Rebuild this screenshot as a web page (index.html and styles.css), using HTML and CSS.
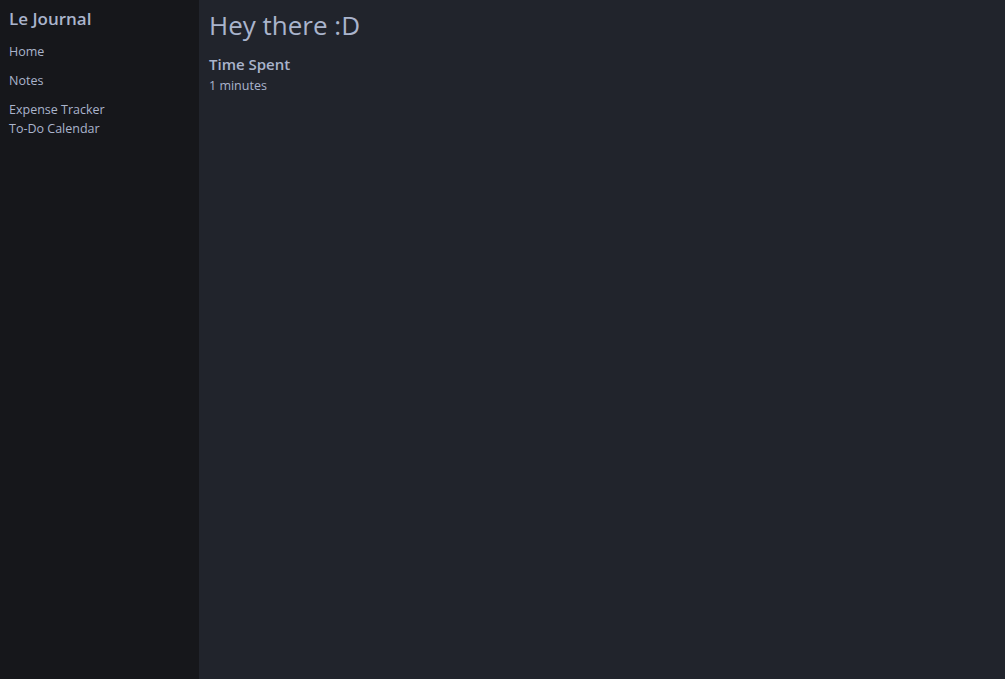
FILE: index.html
```html
<!DOCTYPE html>
<html>
<head>
<meta charset="utf-8">
<link rel="stylesheet" href="styles.css">
</head>
<body>
<div class="app">
  <aside class="sidebar">
    <div class="brand">Le Journal</div>
    <nav class="nav">
      <a class="nav-link gap" href="#">Home</a>
      <a class="nav-link gap" href="#">Notes</a>
      <a class="nav-link" href="#">Expense Tracker</a>
      <a class="nav-link" href="#">To-Do Calendar</a>
    </nav>
  </aside>
  <main class="main">
    <h1 class="title">Hey there :D</h1>
    <h2 class="subtitle">Time Spent</h2>
    <p class="value">1 minutes</p>
  </main>
</div>
</body>
</html>
```
FILE: styles.css
```css
html, body {
  margin: 0;
  height: 100%;
}
body {
  font-family: "Open Sans", "Noto Sans", sans-serif;
  color: #aab4cc;
  background: #21242c;
}
.app {
  display: flex;
  height: 100%;
}
.sidebar {
  width: 199px;
  flex: none;
  background: #16171b;
  padding: 8px 9px;
  box-sizing: border-box;
}
.brand {
  font-size: 17px;
  font-weight: 600;
  line-height: 22px;
  margin-bottom: 12px;
}
.nav {
  display: flex;
  flex-direction: column;
}
.nav-link {
  color: #aab4cc;
  text-decoration: none;
  font-size: 12.5px;
  line-height: 19px;
}
.nav-link.gap {
  margin-bottom: 10px;
}
.main {
  flex: 1;
  padding: 8px 10px;
}
.title {
  margin: 0;
  font-size: 26px;
  font-weight: 500;
  line-height: 34px;
}
.subtitle {
  margin: 12px 0 0;
  font-size: 15px;
  font-weight: 600;
  line-height: 20px;
}
.value {
  margin: 3px 0 0;
  font-size: 12.5px;
  line-height: 18px;
}
```
